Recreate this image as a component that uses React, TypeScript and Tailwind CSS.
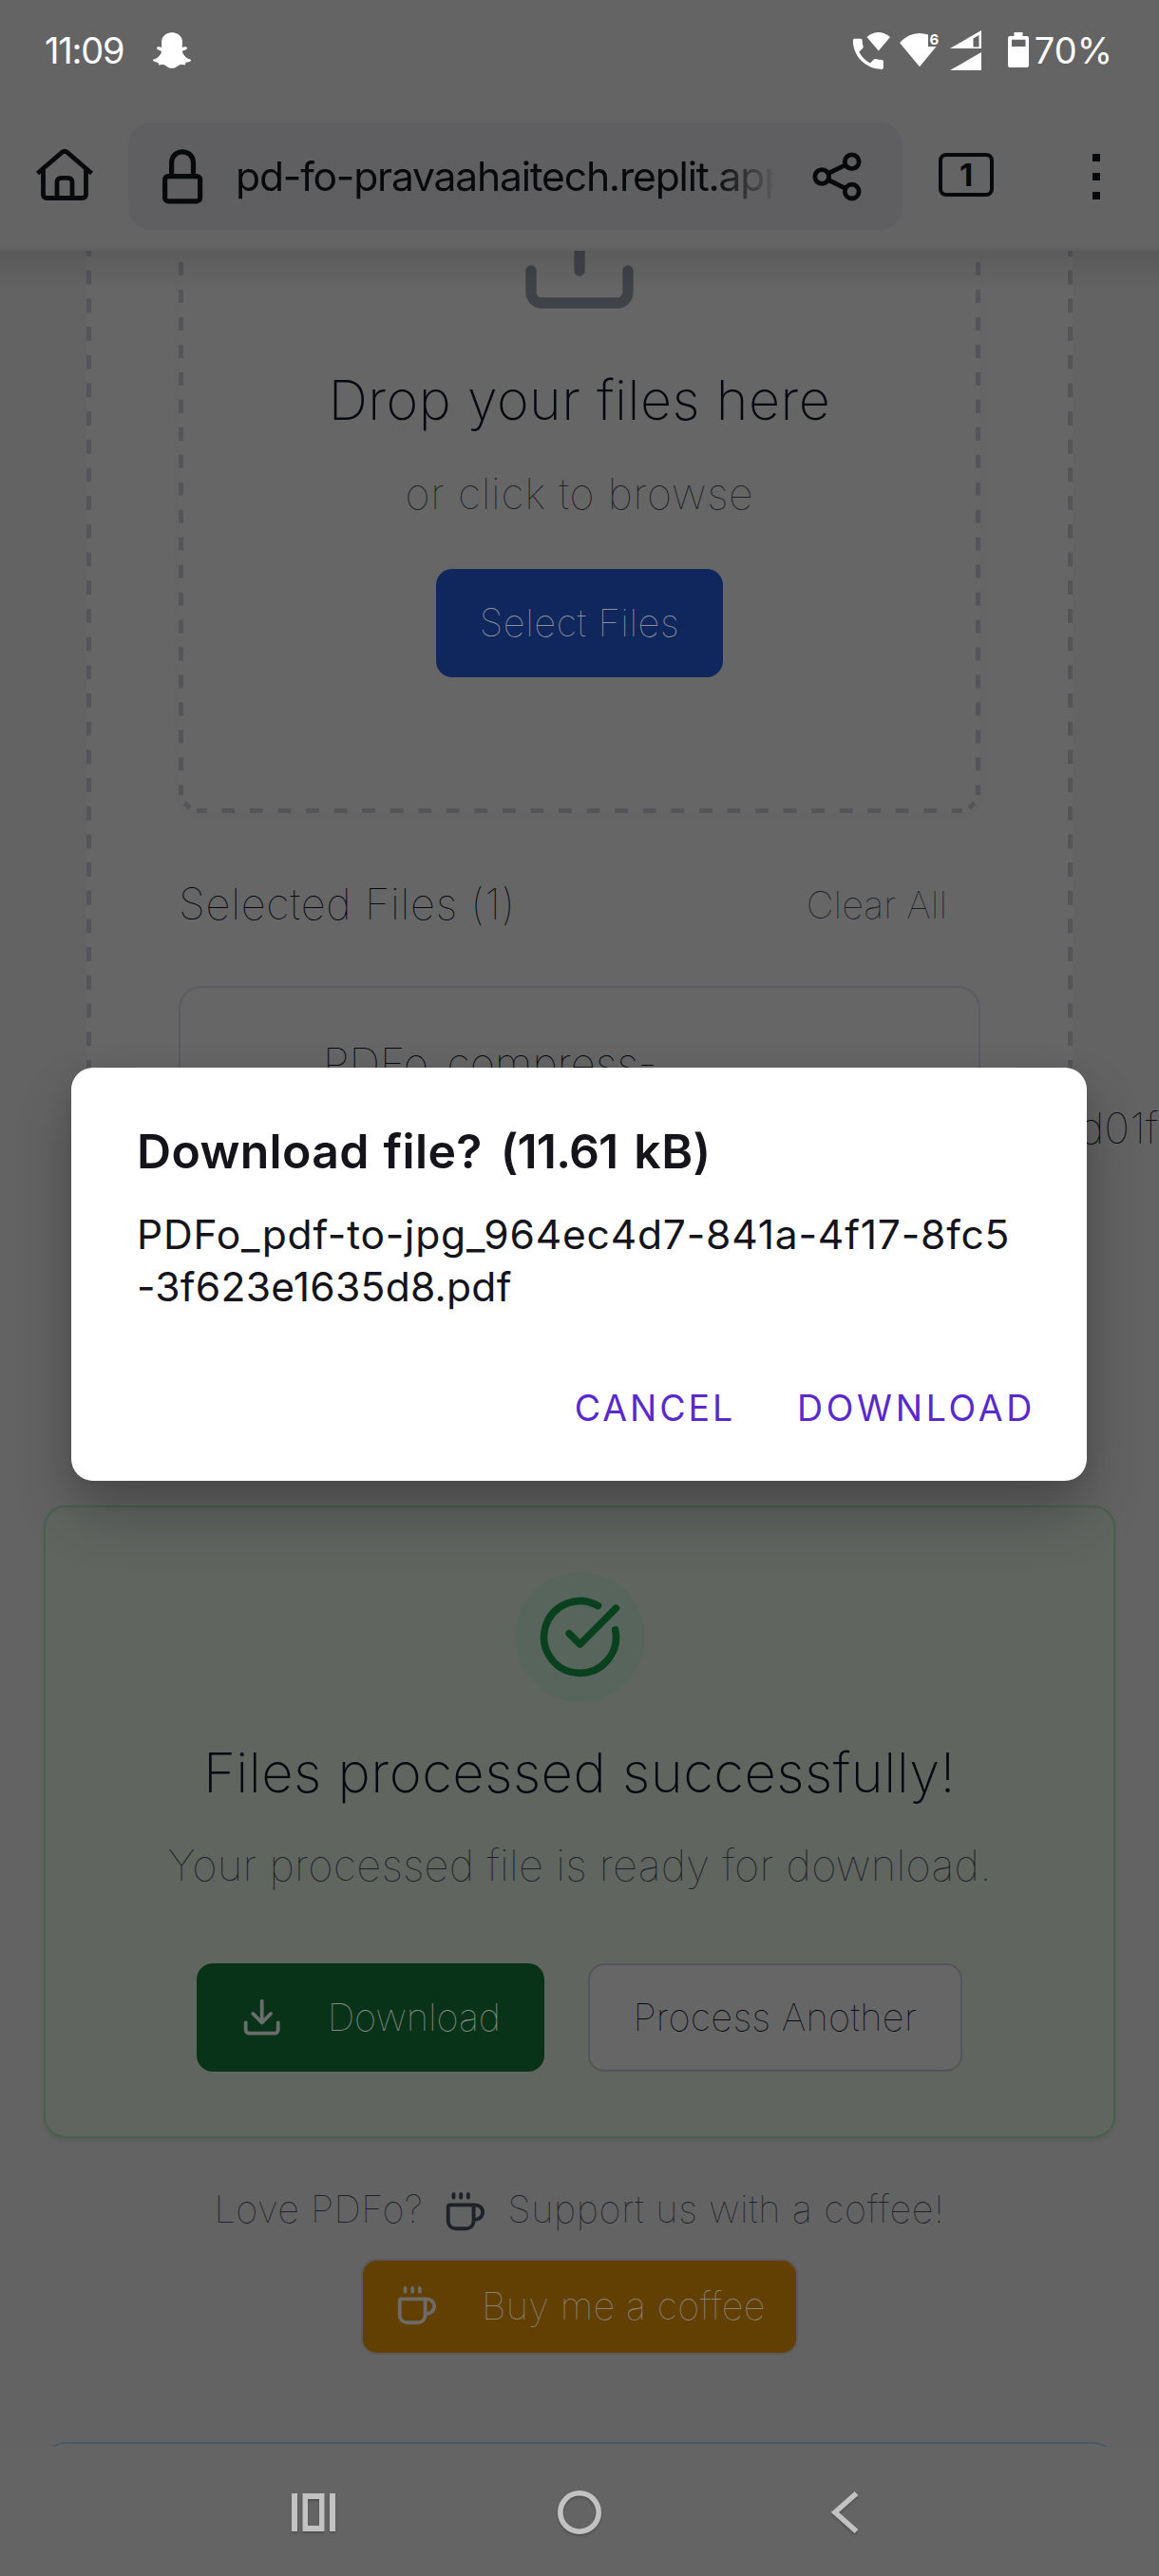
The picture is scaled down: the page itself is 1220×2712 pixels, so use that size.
import { CircleCheckBig, Coffee, Download, Upload } from "lucide-react";
import { FaSnapchatGhost } from "react-icons/fa";

function StatusBar() {
  return (
    <div className="flex h-[106px] shrink-0 items-center pl-[47px] pr-[49px] text-[38px] leading-[40px] text-white">
      <span className="w-[90px] tracking-[-1.2px]">11:09</span>
      <FaSnapchatGhost className="ml-[24px] h-[40px] w-[40px]" />
      <svg className="ml-auto" width="188" height="44" viewBox="897 31 188 44" fill="#fff">
        <path transform="translate(892.5 35.5) scale(1.78)" d="M6.62 10.79c1.44 2.83 3.76 5.14 6.59 6.59l2.2-2.2c.27-.27.67-.36 1.02-.24 1.12.37 2.33.57 3.57.57.55 0 1 .45 1 1V20c0 .55-.45 1-1 1-9.39 0-17-7.61-17-17 0-.55.45-1 1-1h3.5c.55 0 1 .45 1 1 0 1.25.2 2.45.57 3.57.11.35.03.74-.25 1.02z" />
        <path d="M912.5 39Q924.5 29 937 39L924.8 53.500Z" />
        <path d="M947 45Q960 31 977 36.500V49H985.500L968 70.300Z" />
        <text x="978.500" y="46.800" fontSize="15" fontWeight="700" fontFamily="Inter, sans-serif">6</text>
        <path fillRule="evenodd" d="M1000 51L1033 32V51ZM1024.500 40.500V49.500H1030.500V37Z" />
        <path d="M1000 74L1033 55V74Z" />
        <path fillRule="evenodd" d="M1067.500 34H1076.500V38H1081Q1083 38 1083 40V69Q1083 71 1081 71H1063Q1061 71 1061 69V40Q1061 38 1063 38H1067.500ZM1065 41.700V49H1079.500V41.700Z" />
      </svg>
      <span className="ml-[4px] whitespace-nowrap">70%</span>
    </div>
  );
}

function BrowserBar() {
  return (
    <div className="flex h-[158px] shrink-0 items-start border-b-[3px] border-[#5f5f5f] pt-[23px] text-[#08090b]">
      <svg className="ml-[34px] mt-[22px] shrink-0" width="68" height="68" viewBox="34 151 68 68" fill="none" stroke="currentColor" strokeWidth="4.8">
        <path d="M39.500 182.500L65.500 160.200Q68 158.200 70.500 160.200L96.500 182.500" />
        <path d="M45.500 178V204.500Q45.500 208.500 49.500 208.500H86.500Q90.500 208.500 90.500 204.500V178" />
        <path d="M60 208V192Q60 187.300 65 187.300H71Q76 187.300 76 192V208" />
      </svg>
      <div className="ml-[33px] flex h-[113px] w-[815px] items-center rounded-[24px] bg-[#5f5f61]">
        <svg className="ml-[32px] shrink-0" width="50" height="62" viewBox="167 155 50 62" fill="none" stroke="currentColor" strokeWidth="5.2">
          <rect x="173.600" y="185.600" width="37" height="26.200" rx="3.500" />
          <path d="M180.600 185V171.500C180.600 156 203.500 156 203.500 171.500V185" />
        </svg>
        <div className="ml-[31px] w-[565px] overflow-hidden whitespace-nowrap text-[42.600px] leading-[60px] tracking-[-1.200px] [mask-image:linear-gradient(to_right,#000_89%,transparent_101%)]">
          pd-fo-pravaahaitech.replit.app
        </div>
        <svg className="ml-[39px] shrink-0" width="60" height="60" viewBox="854 155 60 60" fill="none" stroke="currentColor" strokeWidth="4.800">
          <circle cx="867.200" cy="185" r="7.400" />
          <circle cx="898.700" cy="169.300" r="7.400" />
          <circle cx="898.700" cy="200.600" r="7.400" />
          <path d="M874 181.500L892 172.700M874 188.500L892 197.300" />
        </svg>
      </div>
      <div className="ml-[38px] mt-[32px] flex h-[46px] w-[58px] items-center justify-center rounded-[8px] border-[4.600px] border-[#08090b] text-[33px] font-bold leading-[36px]">
        1
      </div>
      <div className="ml-[104px] mt-[33px] flex flex-col gap-[12px]">
        <span className="size-[8px] bg-[#08090b]" />
        <span className="size-[8px] bg-[#08090b]" />
        <span className="size-[8px] bg-[#08090b]" />
      </div>
    </div>
  );
}

function DropZone() {
  return (
    <div className="relative ml-[97px] flex h-[592px] w-[844px] flex-col items-center rounded-b-[20px] shadow-[0_2px_6px_rgba(0,0,0,0.03)]">
      <span className="absolute left-0 top-[11.500px] h-[561.500px] w-[5px] bg-[linear-gradient(#545459_14.300px,transparent_14.300px)] bg-[length:5px_28.980px]" />
      <span className="absolute right-0 top-[11.500px] h-[561.500px] w-[5px] bg-[linear-gradient(#545459_14.300px,transparent_14.300px)] bg-[length:5px_28.980px]" />
      <span className="absolute bottom-0 left-[19px] h-[5px] w-[806px] bg-[linear-gradient(90deg,#545459_14px,transparent_14px)] bg-[length:29.570px_5px] bg-[position:-3.200px_0]" />
      <svg className="absolute bottom-0 left-0" width="19" height="19" fill="none" stroke="#545459" strokeWidth="5">
        <path d="M6 8.500L12 13.500" />
      </svg>
      <svg className="absolute bottom-0 right-0" width="19" height="19" fill="none" stroke="#545459" strokeWidth="5">
        <path d="M13 8.500L7 13.500" />
      </svg>
      <Upload className="-mt-[64px] h-[136px] w-[136px] shrink-0 text-[#3f4247]" strokeWidth={2} />
      <h2 className="mt-[45px] h-[80px] whitespace-nowrap text-[57.500px] font-extralight leading-[80px] tracking-[0.500px] text-[#05080f]">Drop your files here</h2>
      <p className="mt-[24.500px] h-[68px] whitespace-nowrap text-[45px] font-thin leading-[68px] tracking-[0.700px] text-[#1e2228]">or click to browse</p>
      <button className="mt-[45.500px] h-[114px] w-[302px] rounded-[17px] bg-[#0f275d] text-[40px] font-thin tracking-[0.500px] text-[#8d9199]">Select Files</button>
    </div>
  );
}

function UploadCard() {
  return (
    <section className="relative ml-[91px] h-[1236px] w-[1038px] shrink-0 bg-[#666666]">
      <span className="absolute left-0 top-0 h-full w-[5px] bg-[linear-gradient(#545459_15px,transparent_15px)] bg-[length:5px_29.700px] bg-[position:0_-9px]" />
      <span className="absolute right-0 top-0 h-full w-[5px] bg-[linear-gradient(#545459_15px,transparent_15px)] bg-[length:5px_29.700px] bg-[position:0_-9px]" />
      <DropZone />
      <div className="ml-[97px] mt-[62px] flex h-[69px] w-[844px] items-center justify-between pr-[35px]">
        <h3 className="whitespace-nowrap text-[45.400px] font-thin tracking-[0.700px] text-[#07090f]">Selected Files (1)</h3>
        <span className="whitespace-nowrap text-[39.800px] font-thin text-[#1e2228]">Clear All</span>
      </div>
      <div className="ml-[97px] mt-[51px] h-[300px] w-[844px] rounded-[24px] border-2 border-[#5b5c60] pl-[150px] pt-[46px] text-[45.400px] font-thin leading-[68px] text-[#07090f]">
        <div className="whitespace-nowrap">PDFo_compress-</div>
        <div className="ml-[796px] w-[110px] overflow-visible whitespace-nowrap">d01f</div>
      </div>
    </section>
  );
}

function SuccessCard() {
  return (
    <section className="mx-[46px] mt-[85px] flex h-[665.500px] shrink-0 flex-col items-center rounded-[23px] border-2 border-[#48614f] bg-[#606560] pt-[68px] shadow-[0_3px_5px_rgba(0,0,0,0.080)]">
      <div className="flex size-[137px] shrink-0 items-center justify-center rounded-full bg-[#58655c]">
        <CircleCheckBig className="size-[91px] text-[#09411e]" strokeWidth={2} />
      </div>
      <h2 className="mt-[34px] h-[80px] whitespace-nowrap text-[58px] font-extralight leading-[80px] tracking-[0.450px] text-[#05080f]">Files processed successfully!</h2>
      <p className="mt-[23.500px] h-[68px] whitespace-nowrap text-[45.400px] font-thin leading-[68px] tracking-[0.220px] text-[#1e2228]">Your processed file is ready for download.</p>
      <div className="mt-[69.500px] flex gap-[45.500px] text-[40px] font-thin">
        <button className="flex h-[113.500px] w-[366px] items-center rounded-[17px] bg-[#083318] pl-[46px] text-[#858a87]">
          <Download className="size-[45.400px] text-[#6a6d6b]" strokeWidth={2} />
          <span className="ml-[46px] tracking-[-0.100px]">Download</span>
        </button>
        <button className="h-[113.500px] w-[394px] rounded-[17px] border-2 border-[#545558] bg-[#666666] tracking-[0.200px] text-[#07090f]">Process Another</button>
      </div>
    </section>
  );
}

function SupportSection() {
  return (
    <section className="flex shrink-0 flex-col items-center pt-[47px] text-[39.800px] font-thin">
      <div className="flex h-[57px] items-center whitespace-nowrap text-[#1e2228]">
        <span className="tracking-[0.400px]">Love PDFo?</span>
        <Coffee className="ml-[21px] mt-[6px] size-[46px]" strokeWidth={2} />
        <span className="ml-[22px] tracking-[0.600px]">Support us with a coffee!</span>
      </div>
      <button className="mt-[23px] flex h-[101px] w-[460px] items-center rounded-[17px] border-2 border-[#5b5a58] bg-[#623f03] pl-[33px] text-[#8b8274]">
        <Coffee className="size-[46px] text-[#6e6b66]" strokeWidth={2} />
        <span className="ml-[46px] whitespace-nowrap tracking-[0.300px]">Buy me a coffee</span>
      </button>
    </section>
  );
}

function NavigationBar() {
  return (
    <nav className="absolute inset-x-0 bottom-0 flex h-[136px] items-center bg-[#646464] pt-[2px]">
      <svg className="ml-[307px] drop-shadow-[0_2px_1px_rgba(0,0,0,0.200)]" width="46" height="40" fill="#c2c2c2">
        <path fillRule="evenodd" d="M0 0H6V40H0ZM40 0H46V40H40ZM11.500 0H34.500V40H11.500ZM17 6V34H29V6Z" />
      </svg>
      <svg className="ml-[234px] drop-shadow-[0_2px_1px_rgba(0,0,0,0.200)]" width="46" height="46" fill="none" stroke="#c2c2c2" strokeWidth="5.600">
        <circle cx="23" cy="23" r="20.200" />
      </svg>
      <svg className="ml-[241px] drop-shadow-[0_2px_1px_rgba(0,0,0,0.200)]" width="30" height="46" fill="none" stroke="#c2c2c2" strokeWidth="5.600">
        <path d="M27.500 3L5 23L27.500 43" />
      </svg>
    </nav>
  );
}

function DownloadDialog() {
  return (
    <div className="absolute left-[75px] top-[1124px] flex h-[435px] w-[1069px] flex-col rounded-[23px] bg-white pl-[69px] pr-[54px] shadow-[0_34px_60px_rgba(0,0,0,0.240),0_4px_24px_rgba(0,0,0,0.080)]">
      <h1 className="mt-[57px] h-[62px] whitespace-nowrap text-[50px] font-semibold leading-[62px] tracking-[0.300px] text-[#15141a] [word-spacing:2px]">
        Download file? <span className="ml-[4px] tracking-[-0.800px]">(11.61</span> <span className="ml-[2px]">kB)</span>
      </h1>
      <p className="mt-[29px] whitespace-nowrap text-[42.600px] leading-[55px] text-[#15141a]">
        <span className="block tracking-[0.780px]">PDFo_pdf-to-jpg_964ec4d7-841a-4f17-8fc5</span>
        <span className="block tracking-[0.220px]">-3f623e1635d8.pdf</span>
      </p>
      <div className="mt-[76px] flex h-[50px] items-center justify-end text-[37.500px] text-[#592acb]">
        <button className="tracking-[2.900px]">CANCEL</button>
        <button className="ml-[65px] tracking-[3.700px]">DOWNLOAD</button>
      </div>
    </div>
  );
}

export default function App() {
  return (
    <div className="relative flex h-[2712px] w-[1220px] flex-col overflow-hidden bg-[#646464] font-['Inter',sans-serif]">
      <StatusBar />
      <BrowserBar />
      <main className="relative flex h-[2312px] flex-col overflow-hidden bg-[#636363]">
        <UploadCard />
        <SuccessCard />
        <SupportSection />
        <section className="mx-[46px] mt-[92px] h-[200px] shrink-0 rounded-[23px] border-2 border-[#4d5866] bg-[#646465]" />
        <div className="absolute inset-x-0 top-0 h-[44px] bg-gradient-to-b from-black/10 to-transparent" />
      </main>
      <NavigationBar />
      <DownloadDialog />
    </div>
  );
}
